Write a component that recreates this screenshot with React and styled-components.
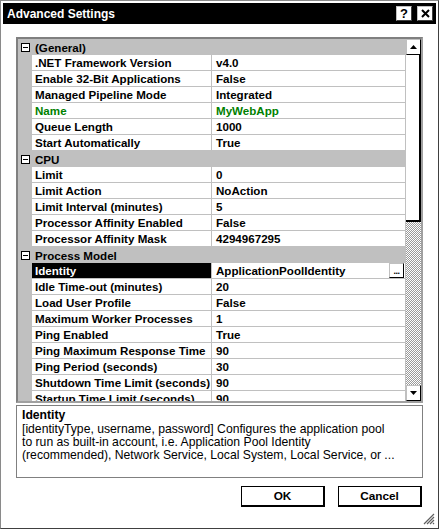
import React from 'react';
import styled, { createGlobalStyle } from 'styled-components';

const GlobalStyle = createGlobalStyle`
  html, body { margin: 0; padding: 0; background: #fff; }
  body { font-family: "Liberation Sans", Arial, sans-serif; }
  * { box-sizing: border-box; }
`;

const sections = [
  {
    title: '(General)',
    rows: [
      ['.NET Framework Version', 'v4.0'],
      ['Enable 32-Bit Applications', 'False'],
      ['Managed Pipeline Mode', 'Integrated'],
      ['Name', 'MyWebApp', 'green'],
      ['Queue Length', '1000'],
      ['Start Automatically', 'True'],
    ],
  },
  {
    title: 'CPU',
    rows: [
      ['Limit', '0'],
      ['Limit Action', 'NoAction'],
      ['Limit Interval (minutes)', '5'],
      ['Processor Affinity Enabled', 'False'],
      ['Processor Affinity Mask', '4294967295'],
    ],
  },
  {
    title: 'Process Model',
    rows: [
      ['Identity', 'ApplicationPoolIdentity', 'selected'],
      ['Idle Time-out (minutes)', '20'],
      ['Load User Profile', 'False'],
      ['Maximum Worker Processes', '1'],
      ['Ping Enabled', 'True'],
      ['Ping Maximum Response Time', '90'],
      ['Ping Period (seconds)', '30'],
      ['Shutdown Time Limit (seconds)', '90'],
      ['Startup Time Limit (seconds)', '90'],
    ],
  },
];

const Window = styled.div`
  position: relative;
  width: 439px;
  height: 529px;
  border: 1px solid #8a8a8a;
  border-right-color: #404040;
  border-bottom-color: #404040;
  padding: 2px;
  background: #fff;
  display: flex;
  flex-direction: column;
`;

const TitleBar = styled.div`
  height: 21px;
  background: #000;
  display: flex;
  align-items: center;
  justify-content: space-between;
  padding-left: 4px;
  padding-right: 3px;
`;

const TitleText = styled.span`
  color: #fff;
  font-weight: bold;
  font-size: 12px;
`;

const TitleButtons = styled.div`
  display: flex;
  gap: 5px;
`;

const TitleButton = styled.div`
  width: 16px;
  height: 15px;
  background: #fff;
  border: 1px solid #c0c0c0;
  border-right-color: #404040;
  border-bottom-color: #404040;
  display: flex;
  align-items: center;
  justify-content: center;
  font-weight: bold;
  font-size: 13px;
  color: #000;
  line-height: 1;
`;

const Body = styled.div`
  flex: 1;
  display: flex;
  flex-direction: column;
  padding: 13px 13px 0 13px;
`;

const Grid = styled.div`
  height: 366px;
  border: 2px solid #a0a0a0;
  border-top-color: #808080;
  border-left-color: #808080;
  display: flex;
`;

const Rows = styled.div`
  flex: 1;
  overflow: hidden;
  font-size: 11.6px;
  font-weight: bold;
`;

const CategoryRow = styled.div`
  height: 16px;
  background: #c0c0c0;
  display: flex;
  align-items: center;
  color: #000;
`;

const Expander = styled.span`
  width: 14px;
  display: flex;
  justify-content: center;
  margin-right: 3px;
`;

const Row = styled.div`
  height: 16px;
  display: flex;
`;

const Margin = styled.div`
  width: 14px;
  background: #c0c0c0;
`;

const LabelCell = styled.div`
  width: 180px;
  border-right: 1px solid #c0c0c0;
  border-bottom: 1px solid #c0c0c0;
  padding-left: 3px;
  line-height: 16px;
  white-space: nowrap;
  overflow: hidden;
  background: ${(p) => (p.$selected ? '#000' : '#fff')};
  color: ${(p) => (p.$selected ? '#fff' : p.$green ? '#008000' : '#000')};
`;

const ValueCell = styled.div`
  flex: 1;
  display: flex;
  align-items: center;
  border-bottom: 1px solid #c0c0c0;
  padding-left: 4px;
  white-space: nowrap;
  overflow: hidden;
  color: ${(p) => (p.$green ? '#008000' : '#000')};
`;

const ValueText = styled.span`
  flex: 1;
  line-height: 16px;
`;

const DotsButton = styled.div`
  width: 15px;
  height: 15px;
  margin-right: 1px;
  background: #fff;
  border: 1px solid #c0c0c0;
  border-right-color: #000;
  border-bottom-color: #000;
  font-size: 9px;
  line-height: 14px;
  text-align: center;
  letter-spacing: -0.5px;
`;

const Scrollbar = styled.div`
  width: 16px;
  display: flex;
  flex-direction: column;
  border-left: 1px solid #c0c0c0;
`;

const ScrollButton = styled.div`
  height: 16px;
  background: #fff;
  border: 1px solid #c0c0c0;
  border-right: 1px solid #000;
  border-bottom: 1px solid #000;
  display: flex;
  align-items: center;
  justify-content: center;
`;

const Thumb = styled.div`
  height: 167px;
  background: #fff;
  border-right: 2px solid #000;
  border-bottom: 2px solid #000;
`;

const Track = styled.div`
  flex: 1;
  background-image: repeating-conic-gradient(#9a9a9a 0 25%, #fff 0 50%);
  background-size: 2px 2px;
`;

const Description = styled.div`
  margin-top: 2px;
  height: 73px;
  border: 1px solid #808080;
  padding: 3px 5px;
  font-size: 12.2px;
  line-height: 13px;
  color: #000;
  white-space: nowrap;
`;

const DescTitle = styled.div`
  font-weight: bold;
  margin-bottom: 1px;
`;

const ButtonRow = styled.div`
  margin-top: 8px;
  display: flex;
  justify-content: flex-end;
  gap: 13px;
  padding-right: 1px;
`;

const DialogButton = styled.div`
  width: 84px;
  height: 21px;
  border: 1px solid #000;
  border-right-width: 2px;
  border-bottom-width: 2px;
  background: #fff;
  display: flex;
  align-items: center;
  justify-content: center;
  font-weight: bold;
  font-size: 11.8px;
`;

const Grip = styled.svg`
  position: absolute;
  right: 3px;
  bottom: 3px;
`;

function MinusBox() {
  return (
    <svg width="9" height="9" viewBox="0 0 9 9">
      <rect x="0.5" y="0.5" width="8" height="8" fill="#fff" stroke="#000" />
      <line x1="2" y1="4.5" x2="7" y2="4.5" stroke="#000" />
    </svg>
  );
}

function Arrow({ down }) {
  return (
    <svg width="7" height="4" viewBox="0 0 7 4">
      <polygon points={down ? '0,0 7,0 3.5,4' : '3.5,0 7,4 0,4'} fill="#000" />
    </svg>
  );
}

export default function App() {
  return (
    <>
      <GlobalStyle />
      <Window>
        <TitleBar>
          <TitleText>Advanced Settings</TitleText>
          <TitleButtons>
            <TitleButton>?</TitleButton>
            <TitleButton>
              <svg width="9" height="9" viewBox="0 0 9 9">
                <path d="M1 1 L8 8 M8 1 L1 8" stroke="#000" strokeWidth="2" />
              </svg>
            </TitleButton>
          </TitleButtons>
        </TitleBar>
        <Body>
          <Grid>
            <Rows>
              {sections.map((s) => (
                <React.Fragment key={s.title}>
                  <CategoryRow>
                    <Expander>
                      <MinusBox />
                    </Expander>
                    {s.title}
                  </CategoryRow>
                  {s.rows.map(([label, value, kind]) => (
                    <Row key={label}>
                      <Margin />
                      <LabelCell $selected={kind === 'selected'} $green={kind === 'green'}>
                        {label}
                      </LabelCell>
                      <ValueCell $green={kind === 'green'}>
                        <ValueText>{value}</ValueText>
                        {kind === 'selected' && <DotsButton>...</DotsButton>}
                      </ValueCell>
                    </Row>
                  ))}
                </React.Fragment>
              ))}
            </Rows>
            <Scrollbar>
              <ScrollButton>
                <Arrow />
              </ScrollButton>
              <Thumb />
              <Track />
              <ScrollButton>
                <Arrow down />
              </ScrollButton>
            </Scrollbar>
          </Grid>
          <Description>
            <DescTitle>Identity</DescTitle>
            [identityType, username, password] Configures the application pool
            <br />
            to run as built-in account, i.e. Application Pool Identity
            <br />
            (recommended), Network Service, Local System, Local Service, or ...
          </Description>
          <ButtonRow>
            <DialogButton>OK</DialogButton>
            <DialogButton>Cancel</DialogButton>
          </ButtonRow>
        </Body>
        <Grip width="12" height="12" viewBox="0 0 12 12">
          <path d="M11 1 L1 11 M11 4 L4 11 M11 7 L7 11 M11 10 L10 11" stroke="#606060" strokeWidth="1.2" />
        </Grip>
      </Window>
    </>
  );
}
